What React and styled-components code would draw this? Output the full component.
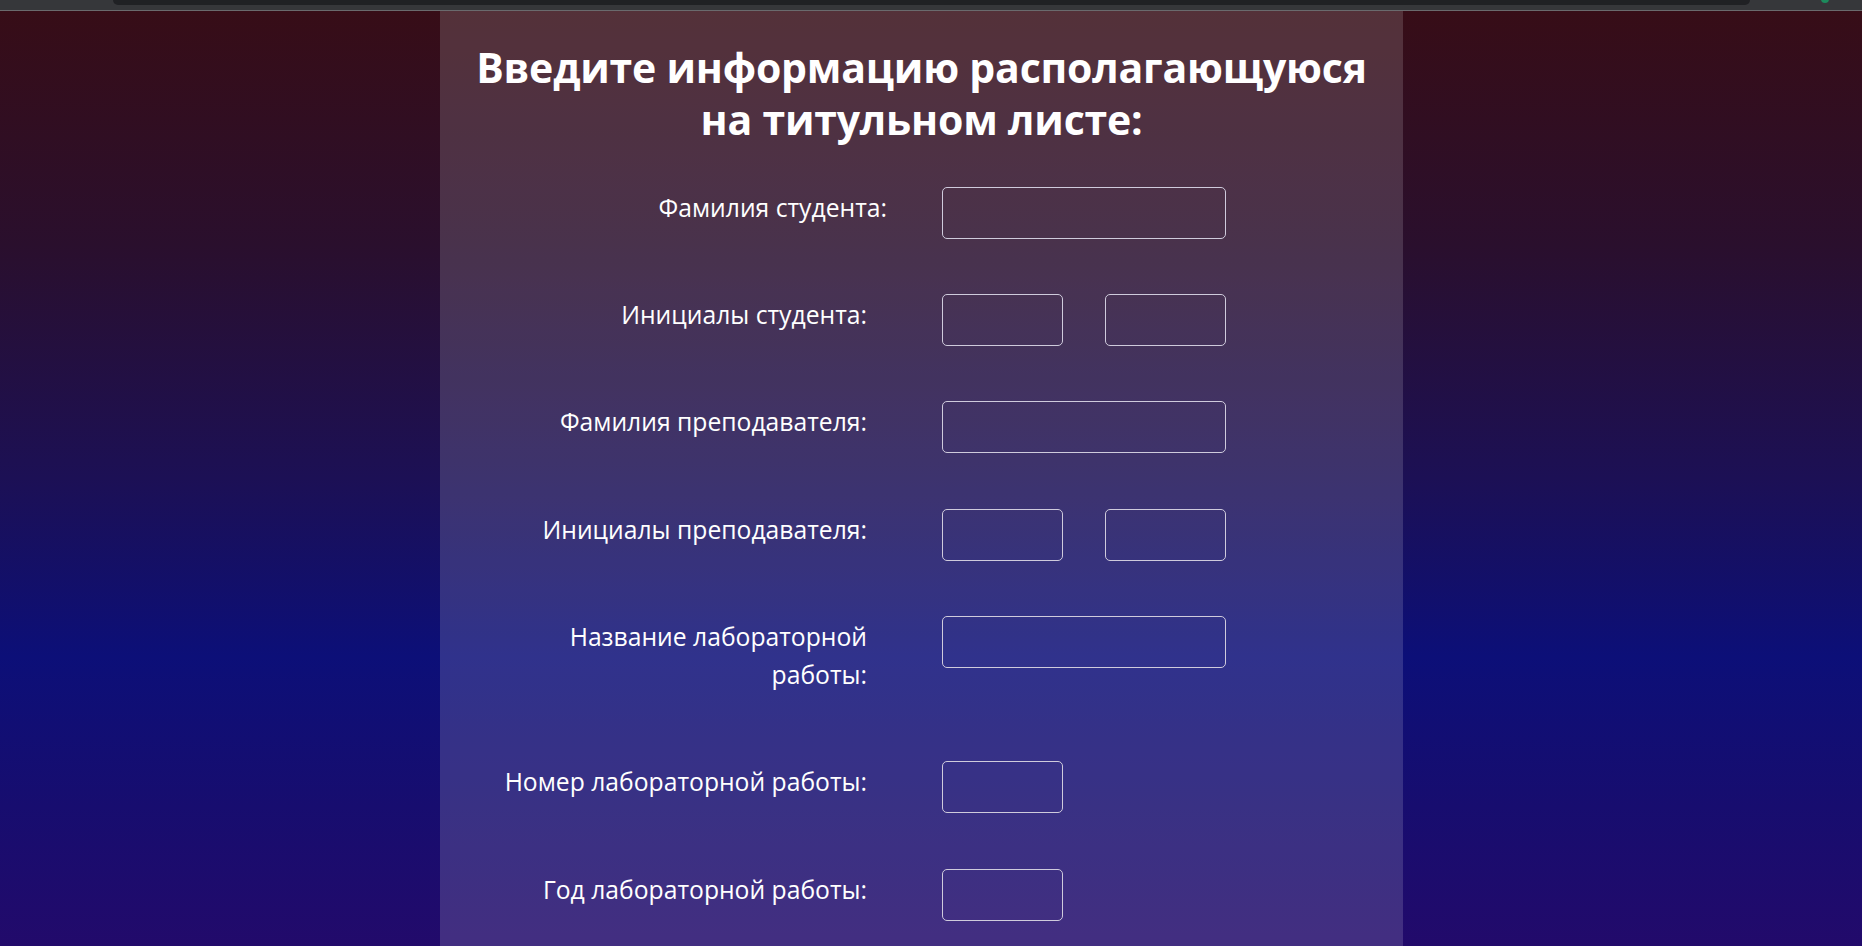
import React from "react";
import styled, { createGlobalStyle } from "styled-components";

const Global = createGlobalStyle`
  html, body { margin: 0; padding: 0; }
  body {
    background: #220a6b;
    font-family: "Open Sans", "Noto Sans", sans-serif;
    color: #ffffff;
    overflow: hidden;
  }
`;

const Chrome = styled.div`
  position: relative;
  height: 10px;
  background: #36373a;
  border-bottom: 1px solid #6a6a6d;
  overflow: hidden;
`;

const ChromeTab = styled.div`
  margin-left: 113px;
  width: 1637px;
  height: 5px;
  background: #202124;
  border-radius: 0 0 10px 10px;
`;

const ChromeDot = styled.span`
  position: absolute;
  left: 1821px;
  top: -5px;
  width: 8px;
  height: 8px;
  border-radius: 50%;
  background: #1d8a5c;
`;

const Stage = styled.main`
  display: flex;
  justify-content: center;
  padding-right: 19px;
  min-height: 935px;
  background: linear-gradient(180deg, #370d17 0%, #2a0f2d 25%, #1c1055 50%, #0c0f78 69%, #170d6f 85%, #220a6b 100%);
`;

const Panel = styled.section`
  width: 963px;
  box-sizing: border-box;
  padding: 30px 0 22px;
  background: rgba(255, 255, 255, 0.15);
`;

const Title = styled.h1`
  margin: 0 0 42px;
  text-align: center;
  font-size: 41px;
  line-height: 52px;
  font-weight: 700;
  letter-spacing: -0.2px;
  color: #ffffff;
`;

const Form = styled.form`
  display: grid;
  grid-template-columns: 390px 284px;
  column-gap: 55px;
  row-gap: 52.7px;
  padding-left: 57px;
  align-items: start;
`;

const Label = styled.label`
  box-sizing: border-box;
  padding: 2px ${(p) => (p.$flush ? 0 : 20)}px 14px 0;
  text-align: right;
  font-size: 24.7px;
  line-height: 38.5px;
  color: #ffffff;
`;

const Fields = styled.div`
  display: flex;
  gap: 42px;
`;

const Input = styled.input`
  box-sizing: border-box;
  width: ${(p) => (p.$short ? 121 : 284)}px;
  height: 52px;
  margin: 0;
  padding: 0 10px;
  background: transparent;
  border: 1.5px solid #cfcbdc;
  border-radius: 5px;
  color: #ffffff;
  font-family: inherit;
  font-size: 20px;
  outline: none;
`;

const rows = [
  { label: "Фамилия студента:", fields: ["long"], flush: true },
  { label: "Инициалы студента:", fields: ["short", "short"] },
  { label: "Фамилия преподавателя:", fields: ["long"] },
  { label: "Инициалы преподавателя:", fields: ["short", "short"] },
  { label: ["Название лабораторной", "работы:"], fields: ["long"] },
  { label: "Номер лабораторной работы:", fields: ["short"] },
  { label: "Год лабораторной работы:", fields: ["short"] },
];

export default function App() {
  return (
    <>
      <Global />
      <Chrome>
        <ChromeTab />
        <ChromeDot />
      </Chrome>
      <Stage>
        <Panel>
          <Title>
            Введите информацию располагающуюся
            <br />
            на титульном листе:
          </Title>
          <Form onSubmit={(e) => e.preventDefault()}>
            {rows.map((row, i) => (
              <React.Fragment key={i}>
                <Label $flush={row.flush}>
                  {Array.isArray(row.label) ? (
                    <>
                      {row.label[0]}
                      <br />
                      {row.label[1]}
                    </>
                  ) : (
                    row.label
                  )}
                </Label>
                <Fields>
                  {row.fields.map((f, j) => (
                    <Input key={j} type="text" $short={f === "short"} />
                  ))}
                </Fields>
              </React.Fragment>
            ))}
          </Form>
        </Panel>
      </Stage>
    </>
  );
}
